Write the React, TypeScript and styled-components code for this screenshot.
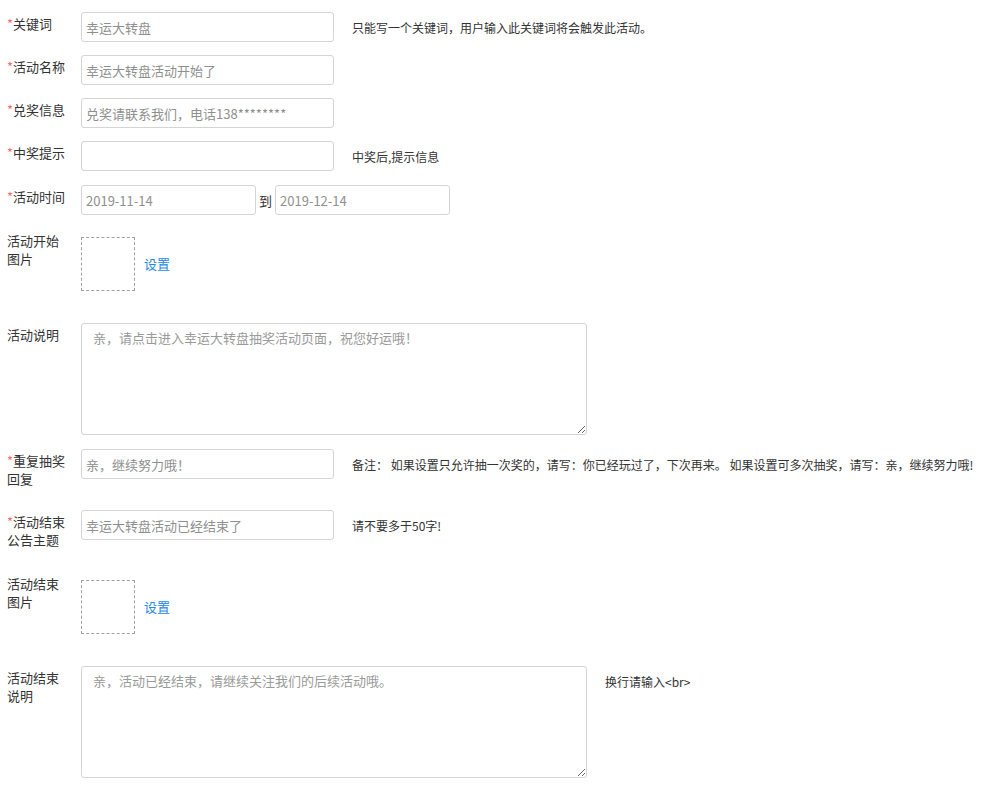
import React from "react";
import styled, { createGlobalStyle } from "styled-components";

const Global = createGlobalStyle`
  html, body { margin: 0; padding: 0; background: #fff; }
  body { font-family: "Microsoft YaHei", "Noto Sans CJK SC", "Noto Sans", sans-serif; color: #333; }
  * { box-sizing: border-box; }
`;

const Form = styled.div`
  padding: 12px 0 0 7px;
  display: flex;
  flex-direction: column;
`;

const Row = styled.div<{ $mb: number }>`
  display: flex;
  align-items: flex-start;
  margin-bottom: ${(p) => p.$mb}px;
`;

const Label = styled.div`
  width: 60px;
  margin-right: 14px;
  flex-shrink: 0;
  font-size: 13px;
  line-height: 18px;
  padding-top: 3px;
  color: #333;
  word-break: break-all;
`;

const Star = styled.span`
  color: #f56c6c;
`;

const Control = styled.div<{ $top?: boolean }>`
  display: flex;
  align-items: ${(p) => (p.$top ? "flex-start" : "center")};
`;

const TextInput = styled.input<{ $w?: number }>`
  width: ${(p) => p.$w ?? 253}px;
  height: 30px;
  border: 1px solid #d4d4d4;
  border-radius: 3px;
  padding: 0 4px;
  font-family: inherit;
  font-size: 13px;
  color: #8f8f8f;
  outline: none;
  background: #fff;
  &::placeholder { color: #9a9a9a; }
`;

const TextArea = styled.textarea`
  width: 506px;
  height: 112px;
  border: 1px solid #d4d4d4;
  border-radius: 3px;
  padding: 5px 11px;
  font-family: inherit;
  font-size: 13px;
  line-height: 18px;
  color: #8f8f8f;
  outline: none;
  display: block;
  &::placeholder { color: #9a9a9a; }
`;

const Hint = styled.div<{ $ml?: number; $pt?: number }>`
  margin-left: ${(p) => p.$ml ?? 18}px;
  padding-top: ${(p) => p.$pt ?? 0}px;
  font-size: 12px;
  line-height: 17px;
  color: #333;
  white-space: nowrap;
`;

const To = styled.span`
  font-size: 13px;
  margin: 0 3px;
  color: #333;
`;

const ImageBox = styled.div`
  width: 54px;
  height: 54px;
  margin-top: 8px;
  border: 1px dashed #a0a0a0;
`;

const ImageControl = styled.div`
  display: flex;
  align-items: flex-end;
`;

const SetLink = styled.a`
  font-size: 13px;
  line-height: 17px;
  color: #1e88e5;
  margin-left: 9px;
  margin-bottom: 19px;
  cursor: pointer;
  text-decoration: none;
`;

export default function App() {
  return (
    <>
      <Global />
      <Form>
        <Row $mb={13}>
          <Label><Star>*</Star>关键词</Label>
          <Control>
            <TextInput defaultValue="幸运大转盘" />
            <Hint>只能写一个关键词，用户输入此关键词将会触发此活动。</Hint>
          </Control>
        </Row>
        <Row $mb={13}>
          <Label><Star>*</Star>活动名称</Label>
          <Control>
            <TextInput defaultValue="幸运大转盘活动开始了" />
          </Control>
        </Row>
        <Row $mb={13}>
          <Label><Star>*</Star>兑奖信息</Label>
          <Control>
            <TextInput defaultValue="兑奖请联系我们，电话138********" />
          </Control>
        </Row>
        <Row $mb={14}>
          <Label><Star>*</Star>中奖提示</Label>
          <Control>
            <TextInput defaultValue="" />
            <Hint>中奖后,提示信息</Hint>
          </Control>
        </Row>
        <Row $mb={14}>
          <Label><Star>*</Star>活动时间</Label>
          <Control>
            <TextInput $w={175} defaultValue="2019-11-14" />
            <To>到</To>
            <TextInput $w={175} defaultValue="2019-12-14" />
          </Control>
        </Row>
        <Row $mb={32}>
          <Label>活动开始图片</Label>
          <ImageControl>
            <ImageBox />
            <SetLink>设置</SetLink>
          </ImageControl>
        </Row>
        <Row $mb={14}>
          <Label>活动说明</Label>
          <Control $top>
            <TextArea placeholder="亲，请点击进入幸运大转盘抽奖活动页面，祝您好运哦！" />
          </Control>
        </Row>
        <Row $mb={22}>
          <Label><Star>*</Star>重复抽奖<br />回复</Label>
          <Control>
            <TextInput defaultValue="亲，继续努力哦！" />
            <Hint>备注： 如果设置只允许抽一次奖的，请写：你已经玩过了，下次再来。 如果设置可多次抽奖，请写：亲，继续努力哦!</Hint>
          </Control>
        </Row>
        <Row $mb={23}>
          <Label><Star>*</Star>活动结束<br />公告主题</Label>
          <Control>
            <TextInput defaultValue="幸运大转盘活动已经结束了" />
            <Hint>请不要多于50字!</Hint>
          </Control>
        </Row>
        <Row $mb={32}>
          <Label>活动结束图片</Label>
          <ImageControl>
            <ImageBox />
            <SetLink>设置</SetLink>
          </ImageControl>
        </Row>
        <Row $mb={0}>
          <Label>活动结束说明</Label>
          <Control $top>
            <TextArea placeholder="亲，活动已经结束，请继续关注我们的后续活动哦。" />
            <Hint $pt={7}>换行请输入&lt;br&gt;</Hint>
          </Control>
        </Row>
      </Form>
    </>
  );
}
